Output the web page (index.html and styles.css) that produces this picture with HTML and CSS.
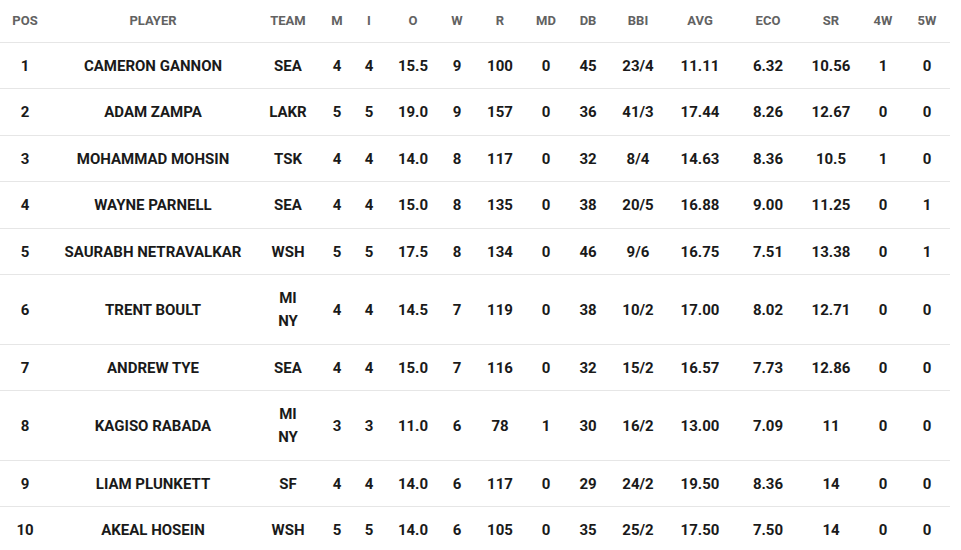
FILE: index.html
```html
<!DOCTYPE html>
<html>
<head>
<meta charset="utf-8">
<link rel="stylesheet" href="styles.css">
</head>
<body>
<table class="stats">
  <colgroup>
    <col class="c-pos"><col class="c-player"><col class="c-team"><col class="c-m"><col class="c-i"><col class="c-o"><col class="c-w"><col class="c-r"><col class="c-md"><col class="c-db"><col class="c-bbi"><col class="c-avg"><col class="c-eco"><col class="c-sr"><col class="c-4w"><col class="c-5w">
  </colgroup>
  <thead>
    <tr><th>POS</th><th>PLAYER</th><th>TEAM</th><th>M</th><th>I</th><th>O</th><th>W</th><th>R</th><th>MD</th><th>DB</th><th>BBI</th><th>AVG</th><th>ECO</th><th>SR</th><th>4W</th><th>5W</th></tr>
  </thead>
  <tbody>
    <tr><td>1</td><td>CAMERON GANNON</td><td><span class="team">SEA</span></td><td>4</td><td>4</td><td>15.5</td><td>9</td><td>100</td><td>0</td><td>45</td><td>23/4</td><td>11.11</td><td>6.32</td><td>10.56</td><td>1</td><td>0</td></tr>
    <tr><td>2</td><td>ADAM ZAMPA</td><td><span class="team">LAKR</span></td><td>5</td><td>5</td><td>19.0</td><td>9</td><td>157</td><td>0</td><td>36</td><td>41/3</td><td>17.44</td><td>8.26</td><td>12.67</td><td>0</td><td>0</td></tr>
    <tr><td>3</td><td>MOHAMMAD MOHSIN</td><td><span class="team">TSK</span></td><td>4</td><td>4</td><td>14.0</td><td>8</td><td>117</td><td>0</td><td>32</td><td>8/4</td><td>14.63</td><td>8.36</td><td>10.5</td><td>1</td><td>0</td></tr>
    <tr><td>4</td><td>WAYNE PARNELL</td><td><span class="team">SEA</span></td><td>4</td><td>4</td><td>15.0</td><td>8</td><td>135</td><td>0</td><td>38</td><td>20/5</td><td>16.88</td><td>9.00</td><td>11.25</td><td>0</td><td>1</td></tr>
    <tr><td>5</td><td>SAURABH NETRAVALKAR</td><td><span class="team">WSH</span></td><td>5</td><td>5</td><td>17.5</td><td>8</td><td>134</td><td>0</td><td>46</td><td>9/6</td><td>16.75</td><td>7.51</td><td>13.38</td><td>0</td><td>1</td></tr>
    <tr><td>6</td><td>TRENT BOULT</td><td><span class="team">MI NY</span></td><td>4</td><td>4</td><td>14.5</td><td>7</td><td>119</td><td>0</td><td>38</td><td>10/2</td><td>17.00</td><td>8.02</td><td>12.71</td><td>0</td><td>0</td></tr>
    <tr><td>7</td><td>ANDREW TYE</td><td><span class="team">SEA</span></td><td>4</td><td>4</td><td>15.0</td><td>7</td><td>116</td><td>0</td><td>32</td><td>15/2</td><td>16.57</td><td>7.73</td><td>12.86</td><td>0</td><td>0</td></tr>
    <tr><td>8</td><td>KAGISO RABADA</td><td><span class="team">MI NY</span></td><td>3</td><td>3</td><td>11.0</td><td>6</td><td>78</td><td>1</td><td>30</td><td>16/2</td><td>13.00</td><td>7.09</td><td>11</td><td>0</td><td>0</td></tr>
    <tr><td>9</td><td>LIAM PLUNKETT</td><td><span class="team">SF</span></td><td>4</td><td>4</td><td>14.0</td><td>6</td><td>117</td><td>0</td><td>29</td><td>24/2</td><td>19.50</td><td>8.36</td><td>14</td><td>0</td><td>0</td></tr>
    <tr><td>10</td><td>AKEAL HOSEIN</td><td><span class="team">WSH</span></td><td>5</td><td>5</td><td>14.0</td><td>6</td><td>105</td><td>0</td><td>35</td><td>25/2</td><td>17.50</td><td>7.50</td><td>14</td><td>0</td><td>0</td></tr>
  </tbody>
</table>
</body>
</html>
```
FILE: styles.css
```css
html, body {
  margin: 0;
  padding: 0;
  background: #ffffff;
}
body {
  font-family: Roboto, "Liberation Sans", sans-serif;
}
.stats {
  width: 950px;
  table-layout: fixed;
  border-collapse: collapse;
  border-spacing: 0;
}
.c-pos { width: 50px; }
.c-player { width: 206px; }
.c-team { width: 64px; }
.c-m { width: 34px; }
.c-i { width: 30px; }
.c-o { width: 58px; }
.c-w { width: 30px; }
.c-r { width: 56px; }
.c-md { width: 36px; }
.c-db { width: 48px; }
.c-bbi { width: 52px; }
.c-avg { width: 72px; }
.c-eco { width: 64px; }
.c-sr { width: 62px; }
.c-4w { width: 42px; }
.c-5w { width: 46px; }

.stats th {
  height: 42px;
  padding: 0 0 1px 0;
  font-size: 13px;
  font-weight: 700;
  color: #626262;
  text-align: center;
  vertical-align: middle;
  border-bottom: 1px solid #e6e6e6;
  box-sizing: border-box;
}
.stats td {
  padding: 12px 0 10.5px;
  font-size: 15px;
  font-weight: 700;
  line-height: 23px;
  color: #1a1a1a;
  text-align: center;
  vertical-align: middle;
  border-bottom: 1px solid #e6e6e6;
}
.stats tbody tr:last-child td {
  border-bottom: none;
}
.team {
  display: inline-block;
  width: min-content;
}
```
